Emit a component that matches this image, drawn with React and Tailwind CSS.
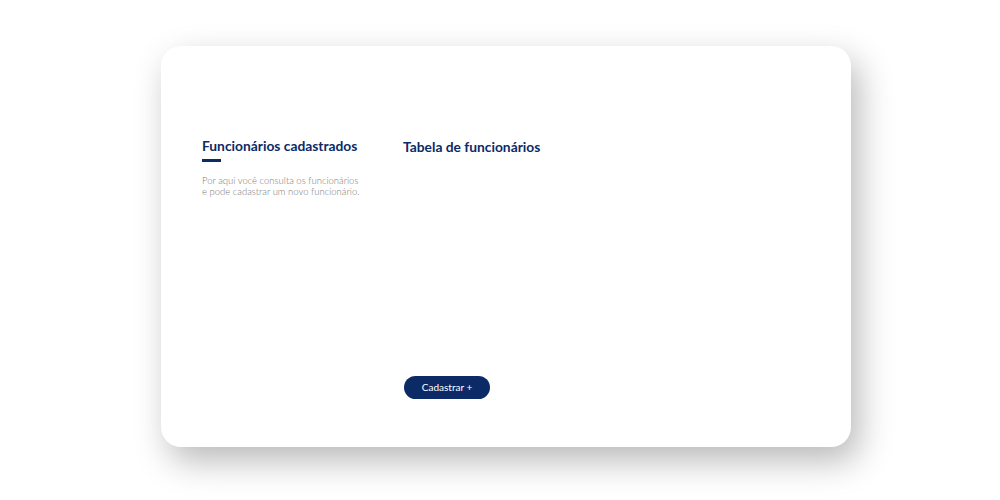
export default function App() {
  return (
    <div className="w-[1000px] h-[500px] bg-white pt-[46px] pl-[161px] font-['Lato',sans-serif]">
      <div className="w-[690px] h-[401px] bg-white rounded-[20px] shadow-[8px_14px_34px_rgba(0,0,0,0.28)] flex pl-[41px] pt-[92px]">
        {/* Left column */}
        <div className="w-[201px] flex flex-col">
          <h2 className="text-[13.8px] leading-[16px] font-bold text-[#0b2a66]">
            Funcionários cadastrados
          </h2>
          <div className="w-[19px] h-[3px] bg-[#0b2a66] mt-[5px]" />
          <p className="mt-[13px] text-[9.5px] leading-[11px] font-light text-[#7a7a7a]">
            Por aqui você consulta os funcionários
            <br />
            e pode cadastrar um novo funcionário.
          </p>
        </div>

        {/* Right column */}
        <div className="flex flex-col">
          <h2 className="mt-[1px] text-[13.8px] leading-[16px] font-bold text-[#0b2a66]">
            Tabela de funcionários
          </h2>
          <div className="h-[221px]" />
          <button className="ml-[1px] w-[86px] h-[23px] rounded-full bg-[#0b2a66] text-white text-[10px]">
            Cadastrar +
          </button>
        </div>
      </div>
    </div>
  );
}
